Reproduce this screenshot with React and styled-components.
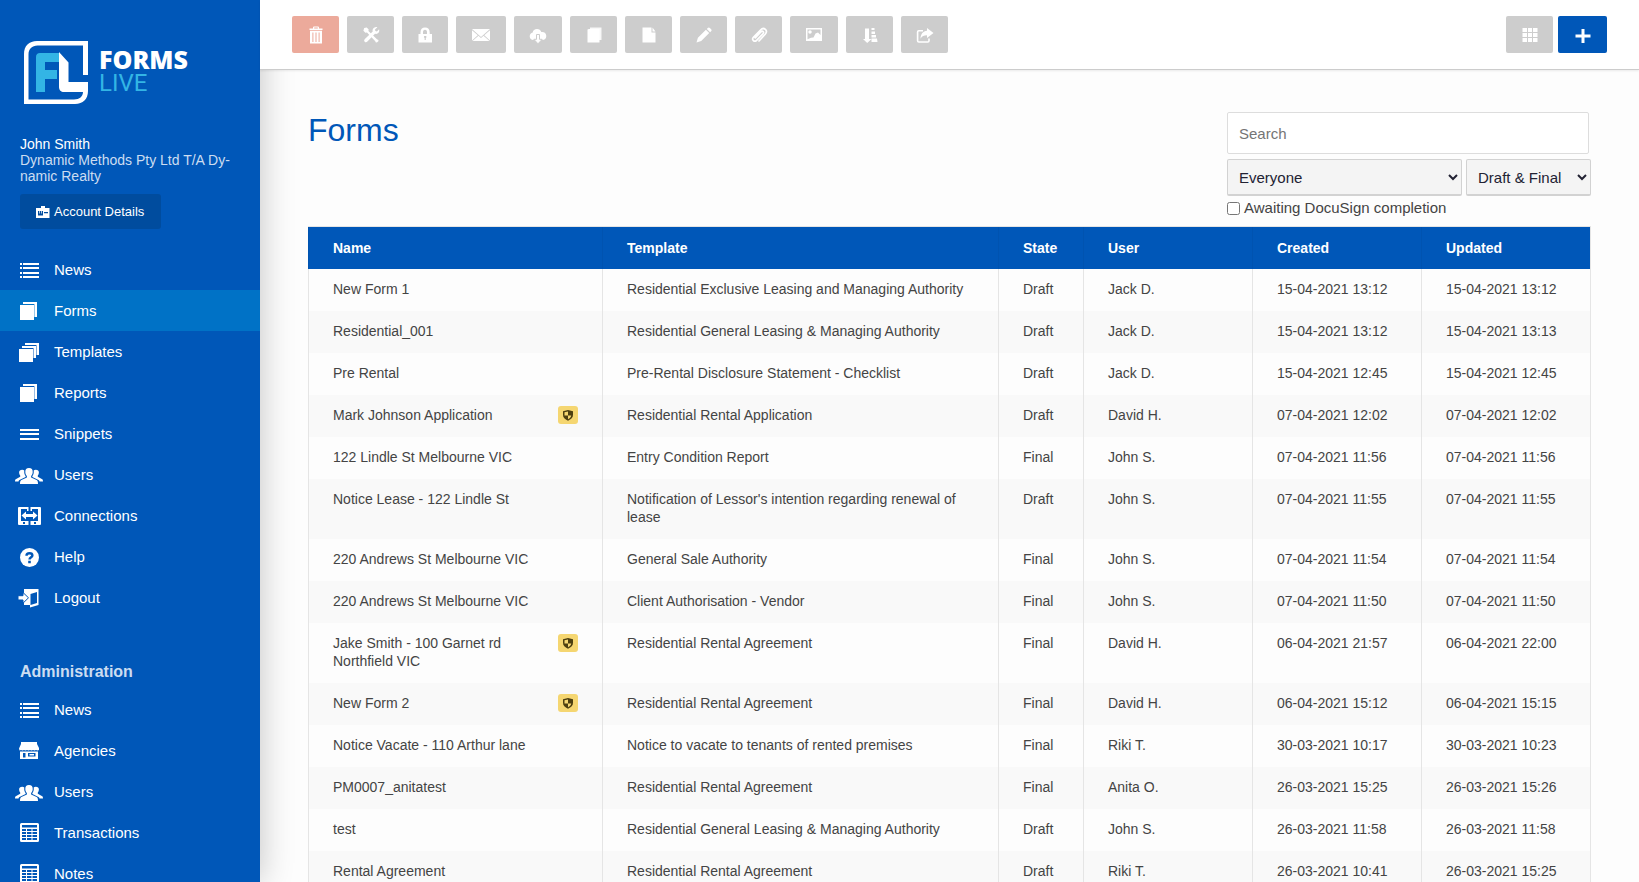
import { useState } from "react";
import styled, { createGlobalStyle } from "styled-components";

const menuItems = [
    { label: "News", icon: "list" },
    { label: "Forms", icon: "sheets" },
    { label: "Templates", icon: "stack" },
    { label: "Reports", icon: "sheets" },
    { label: "Snippets", icon: "lines" },
    { label: "Users", icon: "users" },
    { label: "Connections", icon: "connections" },
    { label: "Help", icon: "help" },
    { label: "Logout", icon: "logout" }
];

const adminItems = [
    { label: "News", icon: "list" },
    { label: "Agencies", icon: "store" },
    { label: "Users", icon: "users" },
    { label: "Transactions", icon: "grid" },
    { label: "Notes", icon: "grid" }
];

const tools = [
    { label: "Delete", icon: "trash", width: 15, color: "#ecaa9b" },
    { label: "Settings", icon: "tools", width: 15 },
    { label: "Lock", icon: "lock", width: 14 },
    { label: "Email", icon: "mail", width: 18 },
    { label: "Download", icon: "cloud", width: 16 },
    { label: "Duplicate", icon: "copy", width: 15 },
    { label: "New file", icon: "file", width: 15 },
    { label: "Edit", icon: "pencil", width: 15 },
    { label: "Attach", icon: "clip", width: 15 },
    { label: "Image", icon: "image", width: 16 },
    { label: "Sort", icon: "sort", width: 15 },
    { label: "Share", icon: "share", width: 15 }
];

const forms = [
    { name: "New Form 1", template: "Residential Exclusive Leasing and Managing Authority", state: "Draft", user: "Jack D.", created: "15-04-2021 13:12", updated: "15-04-2021 13:12" },
    { name: "Residential_001", template: "Residential General Leasing & Managing Authority", state: "Draft", user: "Jack D.", created: "15-04-2021 13:12", updated: "15-04-2021 13:13" },
    { name: "Pre Rental", template: "Pre-Rental Disclosure Statement - Checklist", state: "Draft", user: "Jack D.", created: "15-04-2021 12:45", updated: "15-04-2021 12:45" },
    { name: "Mark Johnson Application", secure: true, template: "Residential Rental Application", state: "Draft", user: "David H.", created: "07-04-2021 12:02", updated: "07-04-2021 12:02" },
    { name: "122 Lindle St Melbourne VIC", template: "Entry Condition Report", state: "Final", user: "John S.", created: "07-04-2021 11:56", updated: "07-04-2021 11:56" },
    { name: "Notice Lease - 122 Lindle St", template: "Notification of Lessor's intention regarding renewal of lease", state: "Draft", user: "John S.", created: "07-04-2021 11:55", updated: "07-04-2021 11:55" },
    { name: "220 Andrews St Melbourne VIC", template: "General Sale Authority", state: "Final", user: "John S.", created: "07-04-2021 11:54", updated: "07-04-2021 11:54" },
    { name: "220 Andrews St Melbourne VIC", template: "Client Authorisation - Vendor", state: "Final", user: "John S.", created: "07-04-2021 11:50", updated: "07-04-2021 11:50" },
    { name: "Jake Smith - 100 Garnet rd Northfield VIC", secure: true, template: "Residential Rental Agreement", state: "Final", user: "David H.", created: "06-04-2021 21:57", updated: "06-04-2021 22:00" },
    { name: "New Form 2", secure: true, template: "Residential Rental Agreement", state: "Final", user: "David H.", created: "06-04-2021 15:12", updated: "06-04-2021 15:15" },
    { name: "Notice Vacate - 110 Arthur lane", template: "Notice to vacate to tenants of rented premises", state: "Final", user: "Riki T.", created: "30-03-2021 10:17", updated: "30-03-2021 10:23" },
    { name: "PM0007_anitatest", template: "Residential Rental Agreement", state: "Final", user: "Anita O.", created: "26-03-2021 15:25", updated: "26-03-2021 15:26" },
    { name: "test", template: "Residential General Leasing & Managing Authority", state: "Draft", user: "John S.", created: "26-03-2021 11:58", updated: "26-03-2021 11:58" },
    { name: "Rental Agreement", template: "Residential Rental Agreement", state: "Draft", user: "Riki T.", created: "26-03-2021 10:41", updated: "26-03-2021 15:25" }
];

// sidebar icons, all on a 28x20 grid
const menuIcons = {
    list: (
        <path d="M5 3h2v2H5zM8 3h16v2H8zM5 7h2v2H5zM8 7h16v2H8zM5 12h2v2H5zM8 12h16v2H8zM5 16h2v2H5zM8 16h16v2H8z" />
    ),
    sheets: <path d="M8 1h14v15h-2.600V3H8zM5 4h14v15H5z" />,
    stack: <path d="M10 1h14v12h-2.500V3H10zM7 4h14v12h-2.500V6H7zM4 7h14v13H4z" />,
    lines: <path d="M5 5h19v2H5zM5 9h19v2H5zM5 14h19v2H5z" />,
    users: (
        <>
            <path d="M14 3c2.600 0 3.800 1.500 3.700 3.900 0 1.700-.7 3-1.600 4v1.600l5.500 2.600c1 .5 1.400 1.200 1.400 3.900H5c0-2.700.4-3.400 1.400-3.900l5.500-2.600v-1.600c-1-1-1.600-2.300-1.600-4C10.200 4.500 11.400 3 14 3z" />
            <path d="M7.200 4.800c1 0 1.700.2 2.100.8-.3 2.300.2 4.200 1.400 5.700l-.1.600-6.100 3.100c-.5.3-.8.700-1 1.500H0c0-1.500.4-2.100 1.200-2.500l4-2.200v-1.200C4.500 9.900 4.100 8.900 4.100 7.600c0-1.900 1.200-2.800 3.100-2.800z" />
            <path d="M20.800 4.800c-1 0-1.700.2-2.100.8.3 2.300-.2 4.200-1.400 5.700l.1.600 6.100 3.100c.5.3.8.7 1 1.500H28c0-1.500-.4-2.100-1.200-2.500l-4-2.200v-1.200c.7-.7 1.100-1.700 1.100-3 0-1.900-1.200-2.800-3.100-2.800z" />
        </>
    ),
    connections: (
        <>
            <path fillRule="evenodd" d="M4 1h9.500v4H12V3H6v12h7.500v4H4a1 1 0 0 1-1-1V2a1 1 0 0 1 1-1zM8 16v2h2v-2zM25 1h-9.500v4H17V3h6v12h-7.500v4H25a1 1 0 0 0 1-1V2a1 1 0 0 0-1-1zM19 16v2h2v-2z" />
            <path d="M6.500 9.500L11 5.500V8h7V5.500l4.500 4-4.500 4V11h-7v2.500z" />
        </>
    ),
    help: (
        <>
            <circle cx="14.500" cy="10.500" r="9.500" />
            <path fill="none" stroke="#0057b8" strokeWidth="2.400" d="M11.500 8.700c0-1.700 1.200-2.500 3-2.500s2.900.9 2.900 2.200c0 1.800-2.900 1.800-2.900 4.100" />
            <path fill="#0057b8" d="M13.200 13.800h2.600v2.400h-2.600z" />
        </>
    ),
    logout: (
        <>
            <path fillRule="evenodd" d="M9 1h14.500v16l-8.500 2.500V17H9zM15.500 6v11l6.500-2V4z" />
            <path stroke="#0057b8" strokeWidth="1" d="M3 7.700h5V4.500l5.500 5.300-5.500 5.400V12H3z" />
        </>
    ),
    store: (
        <path fillRule="evenodd" d="M6 1h16v2l2 4v2l-1.500.500L21 9l-1.500.500L18 9l-1.500.500L15 9l-1.500.500L12 9l-1.500.500L9 9l-1.500.500L6 9l-1.500.500L4 7.500 6 3zM5 10.500h18V18H5zM8 12v4.500h2.500V12zM13 12v3.500h7.500V12zM14.500 13h4.500v1.500h-4.500z" />
    ),
    grid: (
        <path fillRule="evenodd" d="M6.500 0h16A1.500 1.500 0 0 1 24 1.500v16a1.500 1.500 0 0 1-1.500 1.500h-16A1.500 1.500 0 0 1 5 17.500v-16A1.500 1.500 0 0 1 6.500 0zM7 2v2.500h15V2zM7 6v2h4V6zM12 6v2h4.500V6zM17.500 6v2H22V6zM7 9v2h4V9zM12 9v2h4.500V9zM17.500 9v2H22V9zM7 12v2h4v-2zM12 12v2h4.500v-2zM17.500 12v2H22v-2zM7 15v2h4v-2zM12 15v2h4.500v-2zM17.500 15v2H22v-2z" />
    )
};

// toolbar icons, centred in an 18px box
const toolIcons = {
    trash: (
        <path fillRule="evenodd" d="M7 .5h4a1 1 0 0 1 1 1V2.500h3.500V4h-13V2.500H6V1.500a1 1 0 0 1 1-1zM7.200 1.600V2.500h3.600V1.600zM3 4.800h12v12.700H3zM5.400 6.500v9.500h1V6.500zM8.500 6.500v9.500h1V6.500zM11.600 6.500v9.500h1V6.500z" />
    ),
    tools: (
        <>
            <path d="M2.200 2l2.500-.5 2 2-.3 1.600 8.800 8.400 1 .2.400 1.200-1.700 1.700-1.300-.4-.3-1-8.300-8.600-1.600.2-2-2z" />
            <path d="M12 1.700c1.200-.7 2.500-.7 3.400-.4L13 3.600l.4 1.500 1.500.4 2.200-2.300c.5 1.600 0 3-1 3.900-.9.800-2 1-3.100.7l-7.600 7.800c-.9.900-1.900.9-2.700.2-.8-.8-.7-1.900.2-2.700l7.800-7.500c-.4-1.500.1-3 1.300-3.900z" />
        </>
    ),
    lock: (
        <path fillRule="evenodd" d="M9 1.500c3.100 0 4.700 1.800 4.700 4.800V8H16v8.500H2.500V8h2V6.300c0-3 1.500-4.800 4.500-4.800zM9 3.700c-1.400 0-2 .9-2 2.600V8h4V6.300c0-1.700-.6-2.600-2-2.600zM8.200 10l-.3 1.300.7.800v2h1.200v-2l.7-.8-.3-1.300z" />
    ),
    mail: (
        <>
            <path d="M0 3h18l-9 8z" />
            <path d="M0 4.200l5.800 5L0 14.500zM18 4.200l-5.800 5 5.800 5.300zM.5 15l6-5.200L9 12l2.500-2.200 6 5.200z" />
        </>
    ),
    cloud: (
        <>
            <path d="M8 3c2.200 0 3.700 1.200 4.300 3 2.900-.4 5 1.300 5 4 0 2.500-1.700 4-4 4-1.400 0-2.300-.5-3-1.200H7.200C6.500 13.500 5.600 14 4.500 14 2.200 14 .700 12.400.700 10.300c0-2.200 1.300-3.600 3-3.900C3.900 4.300 5.700 3 8 3z" />
            <path stroke="#cdcdcd" strokeWidth="1" d="M7.500 8.500h3v4.800h2.700L9 17.800l-4.200-4.500h2.700z" />
        </>
    ),
    copy: (
        <>
            <path opacity=".85" d="M5 1.500h11.500V14H14V3H5z" />
            <path d="M2.500 3.500L4 3h10.500v13.500h-12z" />
        </>
    ),
    file: <path d="M2.500 1.500h9v5h4v10h-13zM12.500 1.500l3 4h-3z" />,
    pencil: <path d="M1.500 16.500l1.400-4.700 8-8 3.300 3.300-8 8zM11.800 3l1-1c.7-.7 1.400-.7 2.100 0l1.200 1.200c.7.7.7 1.400 0 2.100l-1 1z" />,
    clip: (
        <path fill="none" stroke="currentColor" strokeWidth="1.700" strokeLinecap="round" d="M5.200 11.800l5.700-6c1.700-1.700 3.600.2 2 2l-6.300 6.500c-2.200 2.200-5.300-.6-3.200-3L10.500 4c3.400-3.500 8 .4 4.700 4.300L9 15" />
    ),
    image: (
        <path fillRule="evenodd" d="M1 2h16v13H1zM2.500 3.500v9.800l3.500-1.500 2.500-.3 2-4 2.500-1 2.500 2.500V3.500zM5 4.200a1.700 1.700 0 1 1 0 3.500 1.700 1.700 0 0 1 0-3.500z" />
    ),
    sort: (
        <path d="M4 2.500h4v10.500h2.500L6.200 17 2 13h2zM10.500 2h3v2h-3zM10.500 5.500h3.500v2.500h-3.500zM10.500 9h4.500v2.500h-4.500zM10.500 12.500h5.500l.500 3.500h-6z" />
    ),
    share: (
        <>
            <path d="M11 2l6.500 5L11 12V9.300c-3.200 0-5 .9-6.500 3.400C4.700 8 7 5 11 4.700z" />
            <path fill="none" stroke="currentColor" strokeWidth="1.600" d="M7 4.800H2.800a1.200 1.200 0 0 0-1.200 1.200v8.800c0 .7.500 1.200 1.200 1.200h9a1.200 1.200 0 0 0 1.200-1.200V12.500" />
        </>
    ),
    cells: (
        <path d="M1.500 2H6v4H1.500zM7 2h4v4H7zM12 2h4.500v4H12zM1.500 7H6v4H1.500zM7 7h4v4H7zM12 7h4.500v4H12zM1.500 12H6v4H1.500zM7 12h4v4H7zM12 12h4.500v4H12z" />
    ),
    plus: <path d="M7.500 3h3v5.500h6v3h-6V17h-3v-5.500h-6v-3h6z" />
};

function Menu({ items, active, onSelect, label }) {
    return (
        <nav aria-label={label}>
            {items.map((item) => (
                <MenuLink
                    key={item.label}
                    href={"#" + item.label.toLowerCase()}
                    $active={item.label === active}
                    onClick={() => onSelect && onSelect(item.label)}
                >
                    <svg width="28" height="20" viewBox="0 0 28 20" fill="currentColor" aria-hidden="true">
                        {menuIcons[item.icon]}
                    </svg>
                    {item.label}
                </MenuLink>
            ))}
        </nav>
    );
}

function ToolButton({ label, icon, width, color }) {
    return (
        <Tool type="button" aria-label={label} $color={color} $width={width}>
            <svg width="18" height="18" viewBox="0 0 18 18" fill="currentColor" aria-hidden="true">
                {toolIcons[icon]}
            </svg>
        </Tool>
    );
}

function Logo() {
    return (
        <Brand href="#home">
            <svg width="64" height="64" viewBox="0 0 64 64" aria-hidden="true">
                <path fill="#fff" d="M13 0h51v34h-5V4.500H13.500C8 4.500 4.500 8 4.500 13.500v45H50c5.500 0 9-3 9-7.500H40c-3 0-5-2-5-5V11l9.500 10.500V41H64v9c0 8-5 13-13 13H0V13C0 5 5 0 13 0z" />
                <path fill="#33b5e5" d="M16 12h19v9H21v8h12v9H21v13h-9V16c0-2.500 1.500-4 4-4z" />
            </svg>
            <BrandName>
                <strong>FORMS</strong>
                <span>LIVE</span>
            </BrandName>
        </Brand>
    );
}

function FormRow({ form }) {
    return (
        <tr>
            <td>
                <NameCell>
                    <span>{form.name}</span>
                    {form.secure && (
                        <Badge>
                            <svg width="10" height="12" viewBox="0 0 10 12" role="img" aria-label="Secure">
                                <path fill="#4d3f10" d="M5 1L10 2.200v3.600c0 2.700-1.800 4.700-5 5.900C1.800 10.500 0 8.500 0 5.800V2.200z" />
                                <path fill="#f5d671" d="M5 2.500v4H1.500V3.300zM5 6.500h3.200C7.900 8.200 6.800 9.400 5 10.200z" />
                            </svg>
                        </Badge>
                    )}
                </NameCell>
            </td>
            <td>{form.template}</td>
            <td>{form.state}</td>
            <td>{form.user}</td>
            <td>{form.created}</td>
            <td>{form.updated}</td>
        </tr>
    );
}

export default function App() {
    const [active, setActive] = useState("Forms");
    const [search, setSearch] = useState("");
    const [awaiting, setAwaiting] = useState(false);

    return (
        <>
            <GlobalStyle />
            <Page>
                <Sidebar>
                    <Logo />
                    <Account>
                        <strong>John Smith</strong>
                        <p>Dynamic Methods Pty Ltd T/A Dy&shy;namic Realty</p>
                        <AccountButton type="button">
                            <svg width="14" height="12" viewBox="0 0 14 12" aria-hidden="true">
                                <path fill="#fff" fillRule="evenodd" d="M5 0h4v2h4.500v10H0V2h5zM2 5v4.500h5V5H6v2.500H5.300V5H3.700v2.500H3V5zM8 6v1.200h4V6z" />
                            </svg>
                            Account Details
                        </AccountButton>
                    </Account>
                    <Menu items={menuItems} active={active} onSelect={setActive} label="Main" />
                    <MenuTitle>Administration</MenuTitle>
                    <Menu items={adminItems} label="Administration" />
                </Sidebar>
                <Main>
                    <Toolbar>
                        <ToolGroup $gap="8px">
                            {tools.map((tool) => (
                                <ToolButton key={tool.label} {...tool} />
                            ))}
                        </ToolGroup>
                        <ToolGroup $gap="5px">
                            <ToolButton label="Grid view" icon="cells" width={15} />
                            <ToolButton label="Add form" icon="plus" width={17} color="#0057b8" />
                        </ToolGroup>
                    </Toolbar>
                    <Content>
                        <Heading>
                            <h1>Forms</h1>
                            <Filters>
                                <SearchInput
                                    type="search"
                                    aria-label="Search"
                                    placeholder="Search"
                                    value={search}
                                    onChange={(e) => setSearch(e.target.value)}
                                />
                                <Selects>
                                    <Select aria-label="User">
                                        <option>Everyone</option>
                                    </Select>
                                    <Select aria-label="State" $width="125px">
                                        <option>Draft &amp; Final</option>
                                    </Select>
                                </Selects>
                                <CheckLabel>
                                    <input
                                        type="checkbox"
                                        checked={awaiting}
                                        onChange={(e) => setAwaiting(e.target.checked)}
                                    />
                                    Awaiting DocuSign completion
                                </CheckLabel>
                            </Filters>
                        </Heading>
                        <Table>
                            <colgroup>
                                <Col $width="294px" />
                                <Col />
                                <Col $width="85px" />
                                <Col $width="169px" />
                                <Col $width="169px" />
                                <Col $width="169px" />
                            </colgroup>
                            <thead>
                                <tr>
                                    <th>Name</th>
                                    <th>Template</th>
                                    <th>State</th>
                                    <th>User</th>
                                    <th>Created</th>
                                    <th>Updated</th>
                                </tr>
                            </thead>
                            <tbody>
                                {forms.map((form, index) => (
                                    <FormRow key={index} form={form} />
                                ))}
                            </tbody>
                        </Table>
                    </Content>
                </Main>
            </Page>
        </>
    );
}

const GlobalStyle = createGlobalStyle`
    * {
        box-sizing: border-box;
    }
    body {
        margin: 0;
        background-color: #fdfdfd;
        color: #444;
        font-family: "Liberation Sans", Arial, sans-serif;
        font-size: 15px;
    }
    button, input, select {
        font-family: inherit;
    }
`;
const Page = styled.div`
    display: flex;
    height: 100vh;
    overflow: hidden;
`;
const Sidebar = styled.aside`
    flex: 0 0 260px;
    position: relative;
    z-index: 1;
    padding-top: 41px;
    overflow-y: auto;
    scrollbar-width: none;
    background-color: #0057b8;
    box-shadow: 0 0 32px rgba(0, 0, 0, 0.24);
    color: #fff;
`;
const Brand = styled.a`
    display: flex;
    gap: 11px;
    margin-left: 24px;
    text-decoration: none;
`;
const BrandName = styled.div`
    display: flex;
    flex-direction: column;
    padding-top: 6px;
    line-height: 24px;

    strong {
        font-family: "Open Sans", sans-serif;
        font-size: 25px;
        font-weight: 800;
        color: #fff;
    }
    span {
        font-family: Roboto, sans-serif;
        font-size: 24px;
        font-weight: 400;
        color: #33b5e5;
    }
`;
const Account = styled.div`
    padding: 31px 20px 20px;
    font-size: 14px;
    line-height: 16px;

    strong {
        display: block;
        font-weight: 400;
    }
    p {
        margin: 0;
        color: #ccddf1;
    }
`;
const AccountButton = styled.button`
    display: flex;
    align-items: center;
    gap: 4px;
    height: 35px;
    margin-top: 10px;
    padding: 0 17px 0 16px;
    border: 0;
    border-radius: 3px;
    background-color: #004c9e;
    color: #fff;
    font-size: 13px;
    cursor: pointer;
`;
const MenuLink = styled.a`
    display: flex;
    align-items: center;
    gap: 11px;
    height: 41px;
    padding-left: 15px;
    background-color: ${({ $active }) => ($active ? "#0072c6" : "transparent")};
    color: #fff;
    font-size: 15px;
    text-decoration: none;
`;
const MenuTitle = styled.h2`
    margin: 44px 20px 7px;
    font-size: 16px;
    line-height: 20px;
    color: #ccddf1;
`;
const Main = styled.main`
    flex: 1;
    min-width: 0;
`;
const Toolbar = styled.header`
    position: relative;
    z-index: 2;
    display: flex;
    justify-content: space-between;
    padding: 16px 32px;
    border-bottom: 1px solid #ccc;
    background-color: #fff;
    box-shadow: 0 1px 2px rgba(0, 0, 0, 0.08);
`;
const ToolGroup = styled.div`
    display: flex;
    gap: ${({ $gap }) => $gap};
`;
const Tool = styled.button`
    display: flex;
    align-items: center;
    justify-content: center;
    width: ${({ $width }) => $width + 32}px;
    height: 37px;
    padding: 0;
    border: 0;
    border-radius: 2px;
    background-color: ${({ $color }) => $color || "#cdcdcd"};
    color: #fff;
    cursor: pointer;
`;
const Content = styled.div`
    padding: 42px 48px 0;
`;
const Heading = styled.div`
    display: flex;
    justify-content: space-between;
    align-items: flex-start;
    margin-bottom: 9px;

    h1 {
        margin: 0;
        font-size: 32px;
        font-weight: 400;
        line-height: 37px;
        color: #0057b8;
    }
`;
const Filters = styled.div`
    display: flex;
    flex-direction: column;
    width: 364px;
`;
const SearchInput = styled.input`
    width: 362px;
    height: 42px;
    padding: 0 11px;
    border: 1px solid #ddd;
    border-radius: 2px;
    background-color: #fff;
    font-size: 15px;
`;
const Selects = styled.div`
    display: flex;
    gap: 4px;
    margin: 5px 0 3px;
`;
const Select = styled.select`
    flex: ${({ $width }) => ($width ? "0 0 " + $width : "1")};
    height: 37px;
    padding: 0 0 0 7px;
    border: 1px solid #d2d2d2;
    border-bottom-width: 2px;
    border-radius: 2px;
    background-color: #f4f4f4;
    color: #223;
    font-size: 15px;
`;
const CheckLabel = styled.label`
    display: flex;
    align-items: center;
    gap: 4px;
    line-height: 18px;

    input {
        width: 13px;
        height: 13px;
        margin: 0;
    }
`;
const Table = styled.table`
    width: 100%;
    table-layout: fixed;
    border-collapse: separate;
    border-spacing: 0;
    border: solid #e5e5e5;
    border-width: 1px 1px 0 0;
    font-size: 14px;
    line-height: 18px;

    th, td {
        padding: 12px 24px;
        border-left: 1px solid #e5e5e5;
        text-align: left;
        vertical-align: top;
    }
    th {
        border-color: #0053b0;
        background-color: #0057b8;
        color: #fff;
    }
    td {
        padding: 11px 24px 13px;
    }
    tbody tr:nth-child(even) {
        background-color: #f9f9f9;
    }
`;
const Col = styled.col`
    width: ${({ $width }) => $width || "auto"};
`;
const NameCell = styled.div`
    display: flex;
    justify-content: space-between;
    align-items: flex-start;
    gap: 8px;
`;
const Badge = styled.span`
    display: flex;
    align-items: center;
    justify-content: center;
    flex: 0 0 20px;
    height: 18px;
    border-radius: 3px;
    background-color: #f5d671;
`;
